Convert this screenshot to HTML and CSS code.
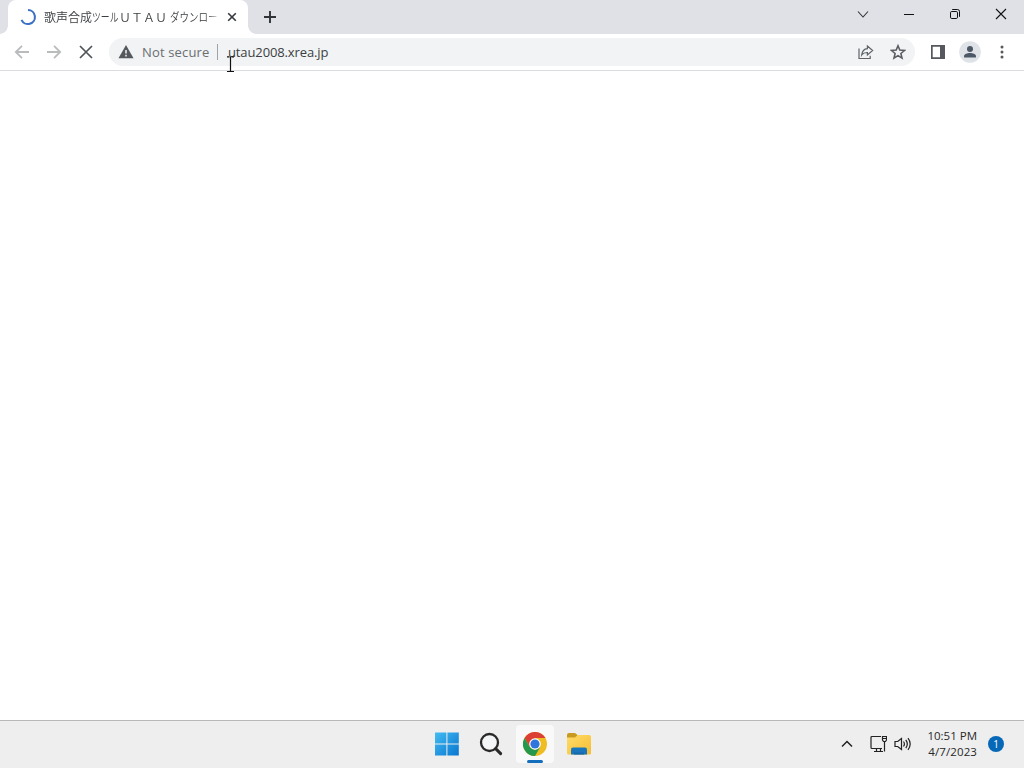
FILE: index.html
```html
<!DOCTYPE html>
<html lang="en">
<head>
<meta charset="utf-8">
<title>歌声合成ツールＵＴＡＵ ダウンロード</title>
<link rel="stylesheet" href="styles.css">
</head>
<body>
<div class="screen">
  <header class="tabstrip">
    <div class="tab">
      <svg class="spinner" width="18" height="18" viewBox="0 0 18 18"><path d="M9 2A7 7 0 1 1 2.500 11.800" fill="none" stroke="#3c70c4" stroke-width="2.1"/></svg>
      <svg class="tab-title" width="174" height="20" viewBox="0 0 174 20">
        <text x="0" y="14.500" textLength="48">歌声合成</text>
        <text x="48" y="14.500" textLength="26.500" lengthAdjust="spacingAndGlyphs">ツール</text>
        <text x="75" y="14.500" textLength="48">ＵＴＡＵ</text>
        <text x="126" y="14.500" textLength="57" lengthAdjust="spacingAndGlyphs">ダウンロード</text>
      </svg>
      <svg class="tab-close" width="10" height="10" viewBox="0 0 10 10"><path d="M1.200 1.200l7.600 7.600M8.800 1.200L1.200 8.800" stroke="#35383c" stroke-width="1.6"/></svg>
    </div>
    <svg class="new-tab" width="14" height="14" viewBox="0 0 14 14"><path d="M7 1v12M1 7h12" stroke="#303337" stroke-width="1.9"/></svg>
    <div class="window-buttons">
      <svg width="46" height="28" viewBox="0 0 46 28"><path d="M18 11.500l5 5.500 5-5.500" fill="none" stroke="#333" stroke-width="1.1"/></svg>
      <svg width="46" height="28" viewBox="0 0 46 28"><path d="M18 14.500h10" stroke="#111"/></svg>
      <svg width="46" height="28" viewBox="0 0 46 28"><rect x="18.500" y="11.500" width="7" height="7" rx="1.3" fill="none" stroke="#111"/><path d="M20.200 9.500h5.300q2 0 2 2v5.300" fill="none" stroke="#111"/></svg>
      <svg width="46" height="28" viewBox="0 0 46 28"><path d="M18 9l10 10M28 9L18 19" stroke="#111" stroke-width="1.1"/></svg>
    </div>
  </header>
  <nav class="toolbar">
    <div class="nav-buttons">
      <svg width="16" height="16" viewBox="0 0 16 16"><path d="M15 8H2M8 1.800L1.800 8 8 14.200" fill="none" stroke="#b9bbbd" stroke-width="1.8"/></svg>
      <svg width="16" height="16" viewBox="0 0 16 16"><path d="M1 8h13M8 1.800L14.200 8 8 14.200" fill="none" stroke="#b9bbbd" stroke-width="1.8"/></svg>
      <svg width="16" height="16" viewBox="0 0 16 16"><path d="M2 2l12 12M14 2L2 14" stroke="#505458" stroke-width="1.7"/></svg>
    </div>
    <div class="omnibox">
      <svg class="warn" width="16" height="14" viewBox="0 0 16 14"><path d="M8 0l7.500 13.300H.5z" fill="#55585c"/><path d="M8 5v3.600M8 9.800v1.600" stroke="#f1f3f4" stroke-width="1.5"/></svg>
      <span class="not-secure">Not secure</span>
      <span class="divider"></span>
      <span class="url">utau2008.xrea.jp</span>
      <svg class="share" width="16" height="16" viewBox="0 0 16 16"><path d="M1 4.500v10h11.200v-2.800M9.400 2l5.200 4.500-5.200 4.500V8.500C6.800 8.400 5 9.200 3.700 11c.4-3.700 2.400-6.100 5.700-6.400z" fill="none" stroke="#5f6368" stroke-width="1.2"/></svg>
      <svg class="star" width="16" height="16" viewBox="0 0 16 16"><path d="M8 1.800l1.800 4.300 4.700.4-3.600 3 1.100 4.600-4-2.500-4 2.500 1.100-4.600-3.600-3 4.700-.4z" fill="none" stroke="#5a5d61" stroke-width="1.6"/></svg>
    </div>
    <svg class="panel" width="14" height="14" viewBox="0 0 14 14"><path d="M0 0h14v14H0zM1.700 1.700v10.600H9V1.700z" fill="#55585c" fill-rule="evenodd"/></svg>
    <svg class="profile" width="22" height="22" viewBox="0 0 22 22"><circle cx="11" cy="11" r="10.800" fill="#dfe3e8"/><circle cx="11" cy="8" r="3" fill="#4c5865"/><path d="M5 16.500v-1.200c0-2.300 3.300-3.200 6-3.200s6 .9 6 3.200v1.200z" fill="#4c5865"/></svg>
    <svg class="menu" width="4" height="14" viewBox="0 0 4 14"><g fill="#55585c"><circle cx="2" cy="2" r="1.5"/><circle cx="2" cy="7" r="1.5"/><circle cx="2" cy="12" r="1.5"/></g></svg>
  </nav>
  <main class="page"></main>
  <footer class="taskbar">
    <div class="apps">
      <span class="app"><svg width="24" height="24" viewBox="0 0 24 24"><defs><linearGradient id="win" x1="0" y1="0" x2="24" y2="24" gradientUnits="userSpaceOnUse"><stop offset="0" stop-color="#43bdf2"/><stop offset="1" stop-color="#0874cf"/></linearGradient></defs><path d="M0 .5h11.400v11.100H0zM12.400.5h11.400v11.100H12.400zM0 12.600h11.400v11H0zM12.400 12.600h11.400v11H12.400z" fill="url(#win)"/></svg></span>
      <span class="app"><svg width="24" height="24" viewBox="0 0 24 24"><circle cx="10.500" cy="10.500" r="8.500" fill="#f4f5f7" stroke="#292929" stroke-width="2.3"/><path d="M16.600 16.600l5 5" stroke="#292929" stroke-width="3" stroke-linecap="round"/></svg></span>
      <span class="app active"><svg width="24" height="24" viewBox="0 0 24 24"><circle cx="12" cy="12" r="12" fill="#efbd22"/><path d="M1.600 6A12 12 0 0 1 22.400 6H12L6.800 15z" fill="#dc3f34"/><path d="M1.600 6A12 12 0 0 0 12 24l5.200-9-5.200 3-5.200-3z" fill="#26984b"/><circle cx="12" cy="12" r="5.800" fill="#fff"/><circle cx="12" cy="12" r="4.600" fill="#2e76dc"/></svg><i class="running"></i></span>
      <span class="app"><svg width="26" height="24" viewBox="0 0 26 24"><defs><linearGradient id="folder" x1="0" y1="0" x2="1" y2="1"><stop offset="0" stop-color="#ffdc68"/><stop offset="1" stop-color="#f5bd34"/></linearGradient></defs><path d="M1 3q0-2 2-2h6l2.500 2v3H1z" fill="#c99a20"/><path d="M1 5.500h8l2.800-2.500H23q2 0 2 2V21q0 1.500-1.500 1.500h-21Q1 22.500 1 21z" fill="url(#folder)"/><path d="M5 22.500v-5q0-2 2-2h12q2 0 2 2v5z" fill="#1976bd"/><path d="M8 22.500v-2h10v2z" fill="#1568ac"/></svg></span>
    </div>
    <div class="tray">
      <svg class="chevron" width="12" height="8" viewBox="0 0 12 8"><path d="M1 6.500l5-5 5 5" fill="none" stroke="#222" stroke-width="1.5"/></svg>
      <svg class="network" width="17" height="18" viewBox="0 0 17 18"><path d="M11 1.500H2q-1 0-1 1v10q0 1 1 1h10M4 16.500h9M6.500 13.500v3M10.500 13.500v3M14.500 6.500v10M12.500 1.500h4v3.500l-1 1.500h-2l-1-1.500zM12.500 3.500h4" fill="none" stroke="#222" stroke-width="1.2"/></svg>
      <svg class="volume" width="18" height="16" viewBox="0 0 18 16"><path d="M1 5.500h2.700L7.500 2.500v11l-3.800-3H1z" fill="none" stroke="#222" stroke-width="1.2"/><path d="M9.500 5.500q1.800 2.500 0 5M11.800 3.800q3 4.200 0 8.400M14 2.200q4.400 5.800 0 11.600" fill="none" stroke="#222" stroke-width="1.2"/></svg>
      <div class="clock"><span class="time">10:51 PM</span><span class="date">4/7/2023</span></div>
      <span class="badge">1</span>
    </div>
  </footer>
  <svg class="cursor" width="9" height="17" viewBox="0 0 9 17"><path d="M4.500 1v15M1 .8h2.500M5.500.8H8M1 15.500h7" stroke="#111" stroke-width="1.2"/></svg>
</div>
</body>
</html>
```
FILE: styles.css
```css
* { box-sizing: border-box; }
body { margin: 0; overflow: hidden; font-family: "Open Sans", "Noto Sans", "Noto Sans CJK JP", sans-serif; }
svg { display: block; flex: none; }
.screen { position: relative; display: flex; flex-direction: column; width: 1024px; height: 768px; background: #fff; }
.tabstrip { display: flex; height: 34px; background: #dfe1e6; padding-left: 8px; }
.tab { position: relative; display: flex; align-items: center; width: 240px; height: 34px; padding: 0 0 1px 11px; border-radius: 8px 8px 0 0; background: #fff; }
.tab::before, .tab::after { content: ""; position: absolute; bottom: 0; width: 8px; height: 8px; }
.tab::before { left: -8px; background: radial-gradient(circle at 0 0, #dfe1e6 7.5px, #fff 8px); }
.tab::after { right: -8px; background: radial-gradient(circle at 100% 0, #dfe1e6 7.5px, #fff 8px); }
.tab-title { margin-left: 7px; overflow: hidden; font: 350 12px/1 "Noto Sans CJK JP", sans-serif; fill: #3c4043; -webkit-mask-image: linear-gradient(90deg, #000 162px, transparent 176px); mask-image: linear-gradient(90deg, #000 162px, transparent 176px); }
.tab-close { margin-left: 9px; }
.new-tab { margin: 10px 0 0 15px; }
.window-buttons { display: flex; margin-left: auto; }
.toolbar { display: flex; align-items: center; height: 37px; padding: 0 20px 0 14px; border-bottom: 1px solid #dadce0; background: #fff; }
.nav-buttons { display: flex; gap: 16px; }
.omnibox { display: flex; align-items: center; width: 806px; height: 28px; margin-left: 15px; padding: 0 9px; border-radius: 14px; background: #f1f3f4; font-size: 13px; line-height: 18px; white-space: nowrap; }
.not-secure { width: 68px; margin-left: 8px; color: #6b6e72; letter-spacing: 0.15px; }
.divider { width: 1px; height: 16px; margin: 0 10px 0 7px; background: #9fa2a6; }
.url { color: #3b3e42; letter-spacing: -0.12px; }
.share { margin-left: auto; }
.star { margin-left: 16px; }
.panel { margin-left: 16px; }
.profile { margin-left: 14px; }
.menu { margin-left: auto; }
.page { flex: 1; background: #fff; }
.taskbar { display: flex; align-items: center; justify-content: space-between; height: 48px; padding: 0 20px 2px 428px; border-top: 1px solid #b8b8b8; background: #eee; }
.apps { display: flex; gap: 6px; }
.app { position: relative; display: flex; align-items: center; justify-content: center; width: 38px; height: 38px; border-radius: 4px; }
.active { background: #f9f9f9; }
.running { position: absolute; bottom: 0; left: 11px; width: 16px; height: 3px; border-radius: 2px; background: #136ebd; }
.tray { display: flex; align-items: center; }
.network { margin-left: 17px; }
.volume { margin-left: 7px; }
.clock { display: flex; flex-direction: column; align-items: flex-end; width: 65px; color: #292929; font-size: 11.5px; line-height: 16px; white-space: nowrap; }
.date { letter-spacing: 0.1px; }
.badge { width: 16px; height: 16px; margin-left: 11px; border-radius: 50%; background: #0868b8; color: #fff; font-size: 10px; line-height: 16px; text-align: center; }
.cursor { position: absolute; left: 226px; top: 56px; }
```
